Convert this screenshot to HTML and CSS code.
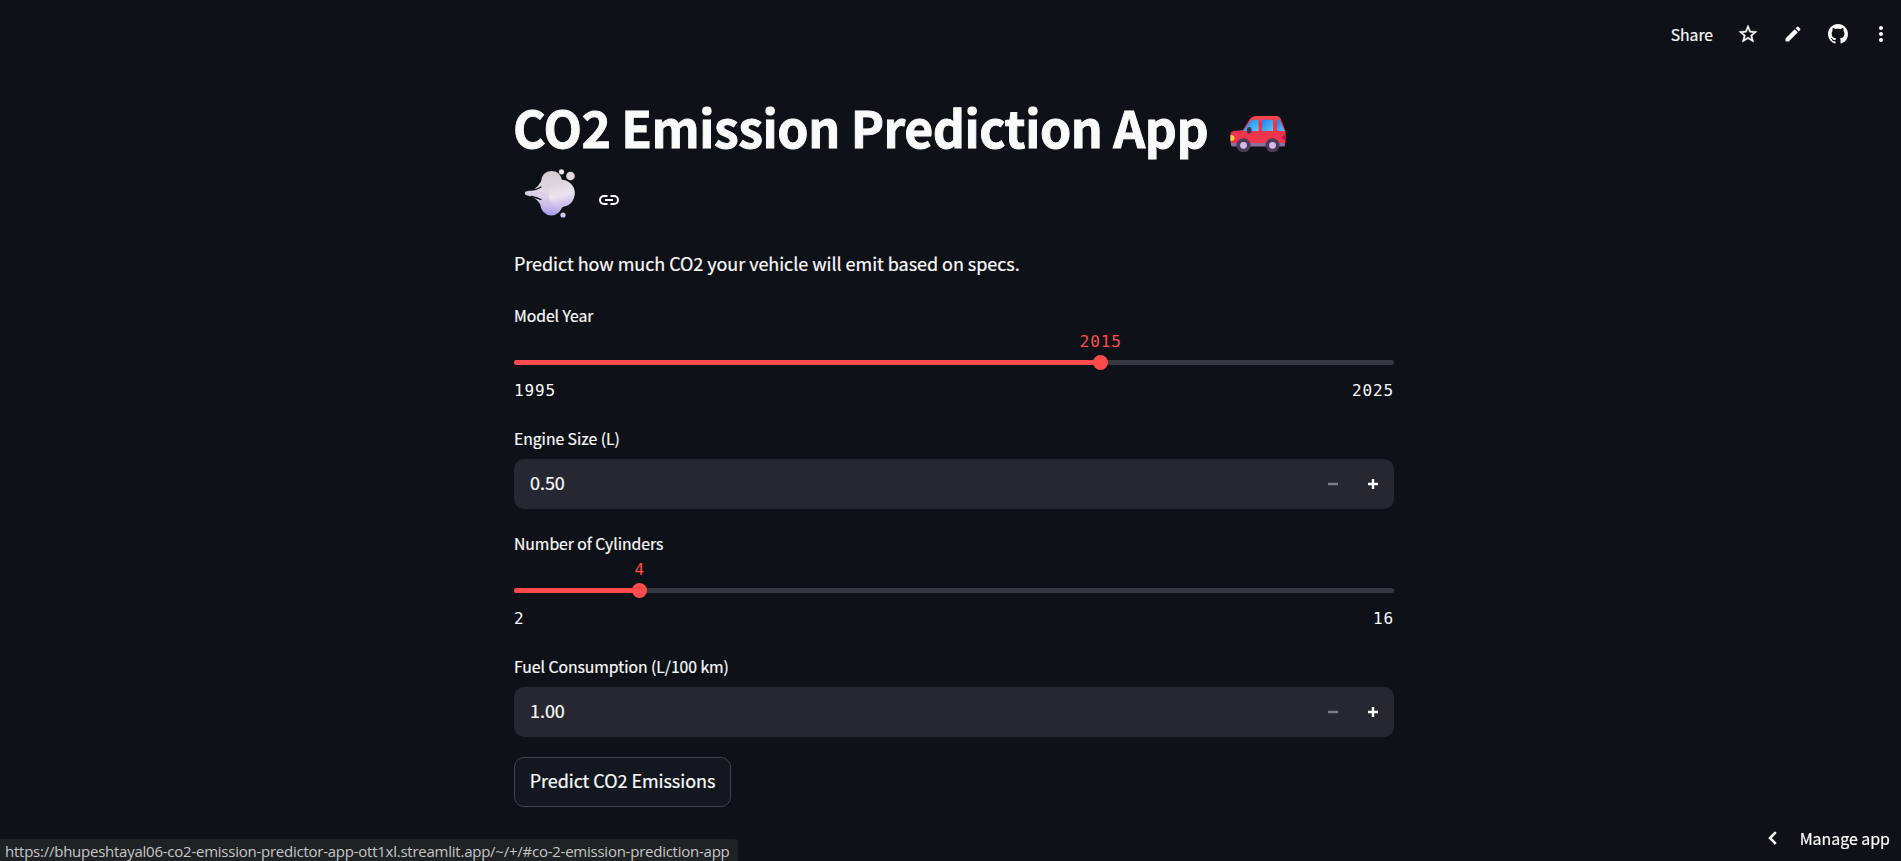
FILE: index.html
```html
<!DOCTYPE html>
<html lang="en">
<head>
<meta charset="utf-8">
<title>CO2 Emission Prediction App</title>
<link rel="stylesheet" href="styles.css">
</head>
<body>
<header class="toolbar">
  <span class="share">Share</span>
  <svg class="icon star" viewBox="0 0 24 24"><path d="M22 9.24l-7.19-.62L12 2 9.19 8.63 2 9.24l5.46 4.73L5.82 21 12 17.27 18.18 21l-1.63-7.03L22 9.24zM12 15.4l-3.76 2.27 1-4.28-3.32-2.88 4.38-.38L12 6.1l1.71 4.04 4.38.38-3.32 2.88 1 4.28L12 15.4z"/></svg>
  <svg class="icon pencil" viewBox="0 0 24 24"><path d="M3 17.46v3.04c0 .28.22.5.5.5h3.04c.13 0 .26-.05.35-.15L17.81 9.94l-3.75-3.75L3.15 17.1c-.1.1-.15.22-.15.36zM20.71 7.04a.996.996 0 0 0 0-1.41l-2.34-2.34a.996.996 0 0 0-1.41 0l-1.83 1.83 3.75 3.75 1.83-1.83z"/></svg>
  <svg class="icon github" viewBox="0 0 16 16"><path d="M8 0C3.58 0 0 3.58 0 8c0 3.54 2.29 6.53 5.47 7.59.4.07.55-.17.55-.38 0-.19-.01-.82-.01-1.49-2.01.37-2.53-.49-2.69-.94-.09-.23-.48-.94-.82-1.13-.28-.15-.68-.52-.01-.53.63-.01 1.08.58 1.23.82.72 1.21 1.87.87 2.33.66.07-.52.28-.87.51-1.07-1.78-.2-3.64-.89-3.64-3.95 0-.87.31-1.59.82-2.15-.08-.2-.36-1.02.08-2.12 0 0 .67-.21 2.2.82.64-.18 1.32-.27 2-.27s1.36.09 2 .27c1.53-1.04 2.2-.82 2.2-.82.44 1.1.16 1.92.08 2.12.51.56.82 1.27.82 2.15 0 3.07-1.87 3.75-3.65 3.95.29.25.54.73.54 1.48 0 1.07-.01 1.93-.01 2.2 0 .21.15.46.55.38A8.01 8.01 0 0 0 16 8c0-4.42-3.58-8-8-8z"/></svg>
  <svg class="icon dots" viewBox="0 0 24 24"><path d="M12 8c1.100 0 2-.9 2-2s-.9-2-2-2-2 .9-2 2 .9 2 2 2zm0 2c-1.100 0-2 .9-2 2s.9 2 2 2 2-.9 2-2-.9-2-2-2zm0 6c-1.100 0-2 .9-2 2s.9 2 2 2 2-.9 2-2-.9-2-2-2z"/></svg>
</header>

<main class="content">
  <h1 class="title">
    <span class="title-row"><span class="title-text">CO2 Emission Prediction App</span>
      <svg class="car" viewBox="0 0 56 38">
        <defs>
          <linearGradient id="glass" x1="0" y1="0" x2="1" y2="1"><stop offset="0" stop-color="#1d7fe8"/><stop offset="1" stop-color="#5cc8ff"/></linearGradient>
          <linearGradient id="body" x1="0" y1="0" x2="0" y2="1"><stop offset="0" stop-color="#f9474f"/><stop offset=".3" stop-color="#e8344c"/><stop offset="1" stop-color="#f2364f"/></linearGradient>
        </defs>
        <path d="M1 27h54v3q0 1.500-1.500 1.500H2.500Q1 31.500 1 30z" fill="#8b6f9d"/>
        <path d="M0.500 19q0-2.500 3-3L13 15 19.500 4.500Q22 1 26 1h20q4 0 5 3.500L55.500 16v12H.5z" fill="url(#body)"/>
        <path d="M13 16 20.500 6q1-1.200 2.500-1.200h5.500V16z" fill="url(#glass)"/>
        <path d="M32 4.800h11V16H32z" fill="url(#glass)"/>
        <path d="M47 4.800h2.500L54.500 16H47z" fill="url(#glass)"/>
        <rect x="17" y="12" width="4.500" height="6.500" rx="2" fill="#3c3350"/>
        <path d="M.5 20q4 0 4 3t-4 3z" fill="#ffd33d"/>
        <path d="M55.500 20q-3.500 0-3.500 2.500t3.500 2.500z" fill="#c70d62"/>
        <circle cx="13.500" cy="30.300" r="7" fill="#4a3c57"/><circle cx="13.500" cy="30.300" r="3.400" fill="#d6b8ee"/>
        <circle cx="42.500" cy="30.300" r="7" fill="#4a3c57"/><circle cx="42.500" cy="30.300" r="3.400" fill="#d6b8ee"/>
      </svg>
    </span>
    <span class="title-row second">
      <svg class="puff" viewBox="0 0 52 50">
        <defs>
          <linearGradient id="cloud" gradientUnits="userSpaceOnUse" x1="30" y1="2" x2="25" y2="48"><stop offset="0" stop-color="#d6ccd2"/><stop offset=".45" stop-color="#e0d7e6"/><stop offset=".7" stop-color="#d2c6e8"/><stop offset="1" stop-color="#a193f0"/></linearGradient>
          <linearGradient id="lobe" x1=".35" y1="0" x2=".6" y2="1"><stop offset="0" stop-color="#d9d2da"/><stop offset=".6" stop-color="#ece3f0"/><stop offset="1" stop-color="#c6b6f0"/></linearGradient>
        </defs>
        <path d="M1.500 22.500Q12 22 17 12.500 18 2.500 27.500 2 36 2 38 11 51 14 50.500 24.500 50 36 38.500 38 34 47 27 46.500 18 46 16 35 12 28 1.500 26 0 24 1.500 22.500z" fill="url(#cloud)"/>
        <circle cx="37.500" cy="24" r="13.200" fill="url(#lobe)"/>
        <path d="M7.500 21q6-.5 9.500-3M7.500 27.500q6 1.500 9.500 3" fill="none" stroke="#0e1117" stroke-width="1.300" stroke-linecap="round"/>
        <circle cx="37.500" cy="2.800" r="2.600" fill="#eee4e8"/><circle cx="46.500" cy="7" r="4.300" fill="#e2d9de"/><circle cx="39" cy="46" r="2.600" fill="#cfc5f5"/>
      </svg>
      <svg class="link" viewBox="0 0 20 10"><path d="M8.500 1H5a4 4 0 0 0 0 8h3.500M11.500 1H15a4 4 0 0 1 0 8h-3.500M6 5h8" fill="none" stroke="#fafafa" stroke-width="2"/></svg>
    </span>
  </h1>
  <p class="intro">Predict how much CO2 your vehicle will emit based on specs.</p>

  <section class="field">
    <label class="label">Model Year</label>
    <div class="slider year">
      <div class="fill"></div>
      <div class="thumb"><span class="value">2015</span></div>
    </div>
    <div class="range"><span>1995</span><span>2025</span></div>
  </section>

  <section class="field number">
    <label class="label">Engine Size (L)</label>
    <div class="input"><span class="amount">0.50</span>
      <svg class="step off" viewBox="0 0 10 10"><path d="M0 5h10"/></svg>
      <svg class="step" viewBox="0 0 10 10"><path d="M0 5h10M5 0v10"/></svg>
    </div>
  </section>

  <section class="field">
    <label class="label">Number of Cylinders</label>
    <div class="slider cylinders">
      <div class="fill"></div>
      <div class="thumb"><span class="value">4</span></div>
    </div>
    <div class="range"><span>2</span><span>16</span></div>
  </section>

  <section class="field number">
    <label class="label">Fuel Consumption (L/100 km)</label>
    <div class="input"><span class="amount">1.00</span>
      <svg class="step off" viewBox="0 0 10 10"><path d="M0 5h10"/></svg>
      <svg class="step" viewBox="0 0 10 10"><path d="M0 5h10M5 0v10"/></svg>
    </div>
  </section>

  <button class="predict">Predict CO2 Emissions</button>
</main>

<div class="manage">
  <svg class="chevron" viewBox="0 0 9 14"><path d="M7.800 1.200 2 7l5.800 5.800"/></svg>
  <span>Manage app</span>
</div>
<div class="status">https://bhupeshtayal06-co2-emission-predictor-app-ott1xl.streamlit.app/~/+/#co-2-emission-prediction-app</div>
</body>
</html>
```
FILE: styles.css
```css
* { box-sizing: border-box; }
body {
  margin: 0;
  height: 861px;
  overflow: hidden;
  background: #0e1117;
  color: #fafafa;
  font-family: "Noto Sans CJK JP", "Noto Sans CJK SC", sans-serif;
  font-size: 18px;
  letter-spacing: -0.05px;
  -webkit-text-stroke: 0.2px currentColor;
}
.toolbar {
  height: 93px;
  padding: 22px 8px 0 0;
  display: flex;
  justify-content: flex-end;
  align-items: flex-start;
}
.share { font-size: 15.75px; line-height: 24px; margin: 1px 24px 0 0; }
.icon { width: 24px; height: 24px; fill: #fafafa; flex: none; }
.star { width: 22px; height: 22px; margin: 1px 24px 0 0; stroke: #fafafa; stroke-width: 0.4; }
.pencil { width: 20px; height: 20px; margin: 2px 25px 0 0; }
.github { width: 20px; height: 20px; margin: 2px 21px 0 0; }
.content { width: 880px; margin-left: 514px; display: flex; flex-direction: column; }
.title {
  margin: 0;
  font-size: 50px;
  line-height: 66px;
  font-weight: 700;
  letter-spacing: -0.47px;
  -webkit-text-stroke: 0.9px currentColor;
}
.title-row { display: flex; height: 66px; white-space: nowrap; align-items: flex-start; }
.title-text { margin-left: -1px; }
.car { width: 56px; height: 38px; margin: 22px 0 0 22px; }
.puff { width: 52px; height: 50px; margin: 10px 0 0 10px; }
.link { width: 20px; height: 10px; margin: 36px 0 0 23px; }
.intro { margin: 22px 0 24px; line-height: 32px; }
.field { height: 99px; margin-bottom: 24px; display: flex; flex-direction: column; }
.number { height: 83px; margin-bottom: 22px; }
.label { font-size: 15.75px; line-height: 24px; padding-top: 1px; height: 24px; }
.slider { position: relative; height: 5px; margin-top: 33px; border-radius: 3px; background: #353840; }
.fill { height: 5px; border-radius: 3px; background: #ff4b4b; }
.thumb {
  position: absolute;
  top: -5px;
  width: 15px;
  height: 15px;
  margin-left: -7.500px;
  border-radius: 50%;
  background: #ff4b4b;
}
.year .fill { width: 66.667%; }
.year .thumb { left: 66.667%; }
.cylinders .fill { width: 14.286%; }
.cylinders .thumb { left: 14.286%; }
.value, .range {
  font: 16px/20px "DejaVu Sans Mono", monospace;
  letter-spacing: 0.85px;
  -webkit-text-stroke: 0;
}
.value { position: absolute; bottom: 18px; left: 50%; transform: translateX(-50%); color: #ff4b4b; }
.range { display: flex; justify-content: space-between; margin-top: 16px; }
.input {
  height: 50px;
  margin-top: 9px;
  padding: 0 16px;
  border-radius: 10px;
  background: #262730;
  display: flex;
  align-items: center;
}
.amount { flex: 1; line-height: 26px; padding-bottom: 4px; }
.step { width: 10px; height: 10px; margin-left: 30px; stroke: #fafafa; stroke-width: 2.4; fill: none; }
.off { stroke: #7d808c; }
.predict {
  align-self: flex-start;
  width: 217px;
  height: 50px;
  margin-top: -2px;
  padding: 0 0 4px;
  border: 1px solid #41444c;
  border-radius: 10px;
  background: #131720;
  color: #fafafa;
  font: inherit;
  letter-spacing: inherit;
}
.manage { position: fixed; right: 11px; bottom: 11px; display: flex; align-items: center; gap: 23px; font-size: 16px; line-height: 24px; }
.chevron { width: 9px; height: 14px; fill: none; stroke: #fafafa; stroke-width: 2.6; }
.status {
  position: fixed;
  left: 0;
  bottom: 0;
  width: 738px;
  height: 22px;
  padding-left: 5px;
  border-top-right-radius: 4px;
  background: #202122;
  color: #c4c7ca;
  font: 15px/25px "Open Sans", sans-serif;
  letter-spacing: -0.245px;
  -webkit-text-stroke: 0;
  white-space: nowrap;
}
```
